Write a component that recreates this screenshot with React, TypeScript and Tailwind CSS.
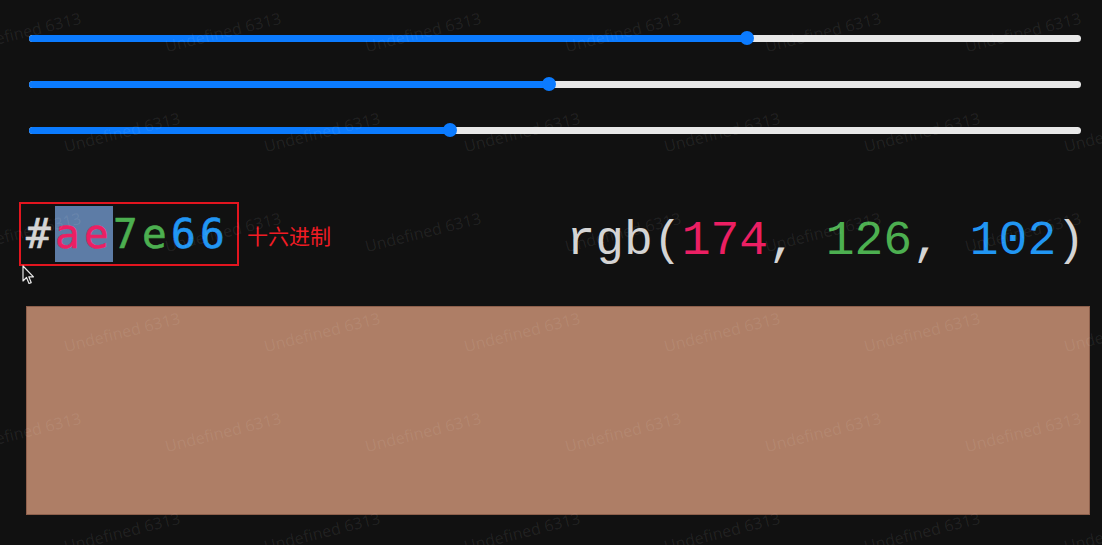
import React from "react";

const values = [174, 126, 102];

function Slider({ value }: { value: number }) {
  const pct = (value / 255) * 100;
  return (
    <div className="h-[46px] flex items-center">
      <div className="relative w-full h-[7px] rounded-full bg-[#e8e8e8]">
        <div className="absolute left-0 top-0 h-full rounded-full bg-[#0b7bff]" style={{ width: `${pct}%` }} />
        <div
          className="absolute top-1/2 w-[14px] h-[14px] -mt-[7px] -ml-[7px] rounded-full bg-[#0b7bff]"
          style={{ left: `${pct}%` }}
        />
      </div>
    </div>
  );
}

function Watermark() {
  const items: { x: number; y: number }[] = [];
  for (let r = 0; r < 6; r++) {
    const y = 32 + r * 100;
    const off = r % 2 === 0 ? 23 : 122;
    for (let c = -1; c < 7; c++) {
      items.push({ x: off + c * 200, y });
    }
  }
  return (
    <div className="pointer-events-none absolute inset-0 overflow-hidden">
      {items.map((p, i) => (
        <div
          key={i}
          className="absolute w-[160px] -ml-[80px] -mt-[11px] text-center text-[16px] leading-[22px] text-white/[0.08] -rotate-[14deg] whitespace-nowrap"
          style={{ left: p.x, top: p.y, fontFamily: '"Open Sans", sans-serif' }}
        >
          Undefined 6313
        </div>
      ))}
    </div>
  );
}

export default function App() {
  return (
    <div className="relative w-[1102px] h-[545px] overflow-hidden bg-[#111111]">
      <div className="pt-[15px] pl-[29px] pr-[21px]">
        {values.map((v, i) => (
          <Slider key={i} value={v} />
        ))}
      </div>

      <div className="mt-[49px] h-[64px] flex items-start pl-[19px] pr-[17px]">
        <div className="w-[220px] h-[64px] border-2 border-[#e3151f] pl-[5px] pt-[2px]">
          <div
            className="flex text-[41px] leading-[56px] tracking-[4.3px] text-[#d4d4d4] [-webkit-text-stroke:0.6px_currentColor]"
            style={{ fontFamily: '"DejaVu Sans Mono", monospace' }}
          >
            <span>#</span>
            <span className="bg-[#5d7ca6] text-[#ec1f63]">ae</span>
            <span className="text-[#4caf50]">7e</span>
            <span className="text-[#2196f3]">66</span>
          </div>
        </div>
        <div
          className="ml-[8px] mt-[19px] text-[21px] leading-[28px] text-[#f01c24]"
          style={{ fontFamily: '"Noto Sans CJK SC", sans-serif' }}
        >
          十六进制
        </div>
        <div
          className="ml-auto mt-[11px] text-[48px] leading-[56px] text-[#d4d4d4] whitespace-pre"
          style={{ fontFamily: '"Liberation Mono", monospace' }}
        >
          rgb(<span className="text-[#ec1f63]">174</span>, <span className="text-[#4caf50]">126</span>, <span className="text-[#2196f3]">102</span>)
        </div>
      </div>

      <div className="ml-[26px] mr-[12px] mt-[40px] h-[209px] bg-[#ae7e66] border border-[#8e604c]" />

      <svg className="absolute left-[22px] top-[265px]" width="14" height="21" viewBox="0 0 14 21">
        <path d="M1 1 L1 16 L4.5 12.5 L7 18.5 L9.2 17.6 L6.8 11.8 L11.5 11.8 Z" fill="#111" stroke="#e8e8e8" strokeWidth="1.2" strokeLinejoin="round" />
      </svg>

      <Watermark />
    </div>
  );
}
